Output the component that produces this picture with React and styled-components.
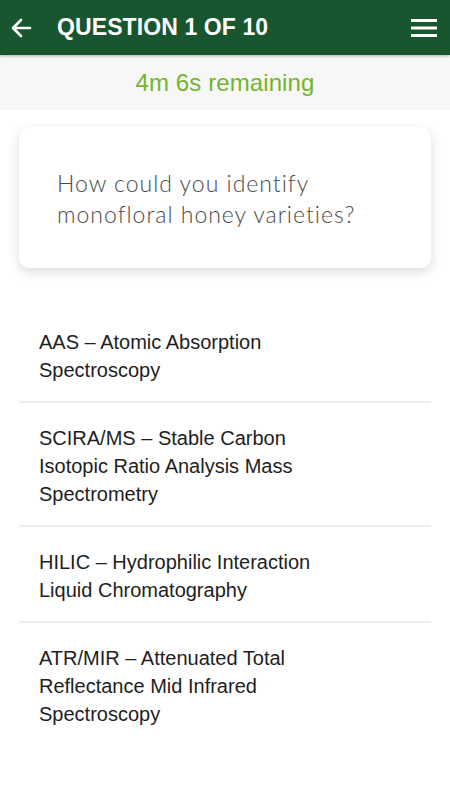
import React from 'react';
import styled, { createGlobalStyle } from 'styled-components';

const GlobalStyle = createGlobalStyle`
  html, body {
    margin: 0;
    padding: 0;
    background: #ffffff;
  }
  body {
    font-family: "Liberation Sans", Arial, sans-serif;
  }
`;

const Page = styled.div`
  width: 450px;
  min-height: 800px;
  background: #ffffff;
`;

const Header = styled.header`
  position: relative;
  z-index: 2;
  height: 55px;
  display: flex;
  align-items: center;
  padding: 0 13px 0 10px;
  box-sizing: border-box;
  background: #19552f;
  box-shadow: 0 1px 3px rgba(0, 0, 0, 0.3);
`;

const IconButton = styled.button`
  display: flex;
  align-items: center;
  justify-content: center;
  padding: 0;
  border: none;
  background: transparent;
  cursor: pointer;
`;

const Title = styled.h1`
  flex: 1;
  margin: 0 0 0 25px;
  font-family: "Liberation Sans", Arial, sans-serif;
  font-weight: 700;
  font-size: 23px;
  color: #ffffff;
  letter-spacing: 0.1px;
`;

const Timer = styled.div`
  height: 55px;
  display: flex;
  align-items: center;
  justify-content: center;
  background: #f7f7f7;
  font-size: 24px;
  letter-spacing: 0.1px;
  color: #74b42c;
`;

const Content = styled.main`
  padding: 17px 19px 0;
`;

const QuestionCard = styled.div`
  height: 141px;
  box-sizing: border-box;
  padding: 41px 38px 0;
  border-radius: 10px;
  background: #ffffff;
  box-shadow: 0 4px 12px rgba(0, 0, 0, 0.14);
  font-family: Lato, "Open Sans", sans-serif;
  font-weight: 300;
  font-size: 23px;
  line-height: 31px;
  color: #4a4a4a;
  letter-spacing: 1px;
`;

const Options = styled.ul`
  list-style: none;
  margin: 39px 0 0;
  padding: 0;
`;

const Option = styled.li`
  padding: 21px 20px 17px;
  border-bottom: ${({ last }) => (last ? 'none' : '2px solid #efefef')};
`;

const OptionText = styled.span`
  display: block;
  max-width: 290px;
  font-size: 20px;
  line-height: 28px;
  color: #1e1e1e;
`;

const options = [
  'AAS – Atomic Absorption Spectroscopy',
  'SCIRA/MS – Stable Carbon Isotopic Ratio Analysis Mass Spectrometry',
  'HILIC – Hydrophilic Interaction Liquid Chromatography',
  'ATR/MIR – Attenuated Total Reflectance Mid Infrared Spectroscopy'
];

function BackArrow() {
  return (
    <svg width="22" height="22" viewBox="0 0 22 22">
      <path
        d="M20 11H3M11 3L3 11L11 19"
        fill="none"
        stroke="#ffffff"
        strokeWidth="2.6"
        strokeLinecap="round"
        strokeLinejoin="round"
      />
    </svg>
  );
}

function MenuIcon() {
  return (
    <svg width="26" height="20" viewBox="0 0 26 20">
      <rect x="0" y="1" width="26" height="3" fill="#ffffff" />
      <rect x="0" y="8.5" width="26" height="3" fill="#ffffff" />
      <rect x="0" y="16" width="26" height="3" fill="#ffffff" />
    </svg>
  );
}

export default function App() {
  return (
    <Page>
      <GlobalStyle />
      <Header>
        <IconButton aria-label="Back">
          <BackArrow />
        </IconButton>
        <Title>QUESTION 1 OF 10</Title>
        <IconButton aria-label="Menu">
          <MenuIcon />
        </IconButton>
      </Header>
      <Timer>4m 6s remaining</Timer>
      <Content>
        <QuestionCard>How could you identify monofloral honey varieties?</QuestionCard>
        <Options>
          {options.map((text, index) => (
            <Option key={index} last={index === options.length - 1}>
              <OptionText>{text}</OptionText>
            </Option>
          ))}
        </Options>
      </Content>
    </Page>
  );
}
